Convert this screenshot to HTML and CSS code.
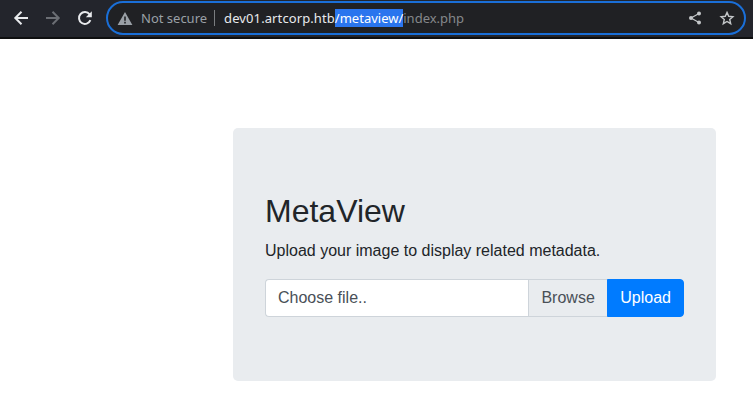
FILE: index.html
```html
<!DOCTYPE html>
<html lang="en">
<head>
<meta charset="utf-8">
<title>MetaView</title>
<link rel="stylesheet" href="styles.css">
</head>
<body>
<header class="toolbar">
  <nav class="nav-buttons">
    <svg class="nav-icon" width="16" height="16" viewBox="0 0 16 16"><path d="M15 8H2.5M8.5 1.8L2.3 8l6.2 6.2" fill="none" stroke="#e8eaed" stroke-width="2"/></svg>
    <svg class="nav-icon" width="16" height="16" viewBox="0 0 16 16"><path d="M1 8h12.5M7.5 1.8L13.7 8l-6.2 6.2" fill="none" stroke="#6b6e74" stroke-width="2"/></svg>
    <svg class="nav-icon" width="16" height="16" viewBox="0 0 16 16"><path d="M13.4 10.2A5.9 5.9 0 1 1 12.6 4.4" fill="none" stroke="#e8eaed" stroke-width="2"/><path d="M14.8 1.2v6h-6z" fill="#e8eaed"/></svg>
  </nav>
  <div class="omnibox">
    <svg class="warn" width="16" height="15" viewBox="0 0 16 15"><path fill-rule="evenodd" d="M8 1l7.4 13H.6zM7.2 5.5v4.2h1.6V5.5zM7.2 10.8v1.6h1.6v-1.6z" fill="#9aa0a6"/></svg>
    <span class="secure">Not secure</span>
    <span class="sep"></span>
    <span class="url"><span class="host">dev01.artcorp.htb</span><span class="sel">/metaview/</span><span class="rest">index.php</span></span>
    <span class="spacer"></span>
    <svg class="share" width="14" height="14" viewBox="0 0 14 14"><path d="M11 2.5L3 7l8 4.5" fill="none" stroke="#c4c7c9" stroke-width="1.2"/><circle cx="11" cy="2.5" r="2" fill="#c4c7c9"/><circle cx="3" cy="7" r="2" fill="#c4c7c9"/><circle cx="11" cy="11.5" r="2" fill="#c4c7c9"/></svg>
    <svg class="star" width="16" height="16" viewBox="0 0 16 16"><path d="M8 2.4l1.7 3.9 4.2.4-3.2 2.8 1 4.2L8 11.5l-3.7 2.2 1-4.2-3.2-2.8 4.2-.4z" fill="none" stroke="#c4c7c9" stroke-width="1.4"/></svg>
  </div>
</header>
<main class="page">
  <section class="jumbotron">
    <h1 class="title">MetaView</h1>
    <p class="lead">Upload your image to display related metadata.</p>
    <form class="input-group">
      <span class="file-label">Choose file..</span>
      <span class="browse">Browse</span>
      <button class="upload" type="button">Upload</button>
    </form>
  </section>
</main>
</body>
</html>
```
FILE: styles.css
```css
* { box-sizing: border-box; }
html, body { margin: 0; padding: 0; height: 100%; background: #fff; overflow: hidden; }
body { font-family: "Liberation Sans", Arial, sans-serif; color: #212529; }

.toolbar {
  display: flex;
  align-items: center;
  height: 39px;
  padding: 1px 7px 2px 13px;
  background: #23252c;
  border-bottom: 2px solid #0e0f10;
}
.nav-buttons { display: flex; align-items: center; gap: 16px; }
.nav-icon { display: block; }
.omnibox {
  display: flex;
  align-items: center;
  flex: 1;
  height: 34px;
  margin-left: 13px;
  padding: 0 9px;
  background: #202124;
  border: 2px solid #1a6fd8;
  border-radius: 17px;
  font-family: "Noto Sans", sans-serif;
  font-size: 13px;
  white-space: nowrap;
}
.warn { margin-right: 8px; }
.secure { color: #9aa0a6; }
.sep { width: 1px; height: 16px; background: #7a7d80; margin: 0 9px 0 7px; }
.host { color: #e8eaed; letter-spacing: .1px; }
.sel { background: #2a75ee; color: #fff; }
.rest { color: #85888b; }
.spacer { flex: 1; }
.share { margin-right: 17px; }
.star { display: block; }

.page { padding: 89px 37px 0 233px; }
.jumbotron {
  height: 253px;
  padding: 64px 32px;
  background: #e9ecef;
  border-radius: 5px;
}
.title {
  margin: 0 0 8px;
  font-size: 32px;
  font-weight: 400;
  line-height: 39px;
}
.lead { margin: 0 0 16px; font-size: 16px; line-height: 24px; }
.input-group { display: flex; height: 38px; font-size: 16px; color: #495057; }
.file-label {
  flex: 1;
  padding: 6px 12px;
  line-height: 24px;
  background: #fff;
  border: 1px solid #ced4da;
  border-right: 0;
  border-radius: 4px 0 0 4px;
}
.browse {
  padding: 6px 12.5px 6px 12px;
  line-height: 24px;
  background: #e9ecef;
  border: 1px solid #ced4da;
  border-right: 0;
}
.upload {
  padding: 6px 12px;
  font: inherit;
  line-height: 24px;
  color: #fff;
  background: #007bff;
  border: 1px solid #007bff;
  border-radius: 0 4px 4px 0;
}
```
